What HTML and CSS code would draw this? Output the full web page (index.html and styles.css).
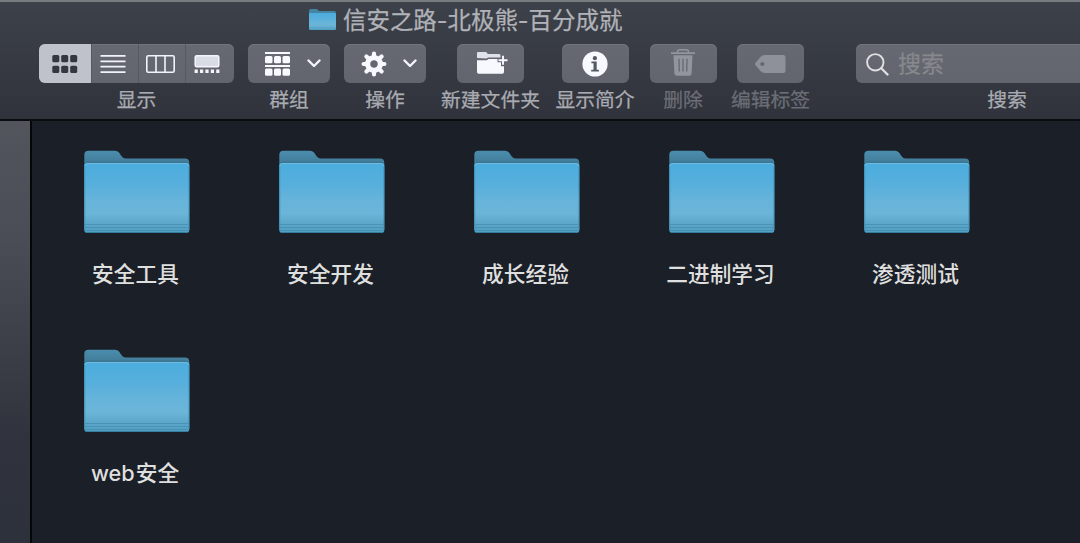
FILE: index.html
```html
<!DOCTYPE html>
<html lang="zh-CN">
<head>
<meta charset="utf-8">
<title>信安之路-北极熊-百分成就</title>
<link rel="stylesheet" href="styles.css">
</head>
<body>
<svg class="defs" width="0" height="0" aria-hidden="true">
  <defs>
    <linearGradient id="front" x1="0" y1="0" x2="0" y2="1">
      <stop offset="0" stop-color="#4badde"/>
      <stop offset=".3" stop-color="#57afdc"/>
      <stop offset=".55" stop-color="#67b4da"/>
      <stop offset=".72" stop-color="#6bb5d8"/>
      <stop offset=".86" stop-color="#5da7ca"/>
      <stop offset="1" stop-color="#4f9fc4"/>
    </linearGradient>
    <linearGradient id="back" x1="0" y1="0" x2="0" y2="1">
      <stop offset="0" stop-color="#4b8dae"/>
      <stop offset=".12" stop-color="#44809d"/>
      <stop offset="1" stop-color="#3c7894"/>
    </linearGradient>
    <symbol id="folder" viewBox="0 0 106 84">
      <path fill="url(#back)" d="M.3 80V5Q.3.8 4.5.8H31Q33.500.8 35 2.600L37.600 6.200Q39.300 8.600 41.500 8.600H101Q105.300 8.600 105.300 13V80Z"/>
      <path fill="#35708c" d="M.3 17Q.3 11.500 4 11.500H101.500Q105.300 11.500 105.300 17Z" opacity=".65"/>
      <rect x=".3" y="13" width="105" height="70" rx="3" fill="url(#front)"/>
      <path d="M1 16Q1.200 13.500 4 13.500H101.500Q104.500 13.500 104.700 16" fill="none" stroke="#6fbce0"/>
      <path d="M.8 16V80M104.800 16V80" stroke="#3f8fb8" opacity=".65"/>
      <path d="M1 74.500H104.500M1 77.500H104.500M1 80.500H104.500" stroke="#4084a4" stroke-width=".9" opacity=".6"/>
      <path d="M2 82.500H103.500" stroke="#347f9f"/>
    </symbol>
  </defs>
</svg>
<div class="window">
  <header class="header">
    <div class="title">
      <svg class="title-icon" viewBox="0 0 27 21"><path fill="#4585a3" d="M0 19V2Q0 0 2 0H8L10 2H25Q27 2 27 4V19Z"/><rect y="4" width="27" height="17" rx="1" fill="url(#front)"/></svg>
      <h1 class="title-text">信安之路-北极熊-百分成就</h1>
    </div>
    <div class="toolbar">
      <div class="tool views">
        <div class="button segments">
          <span class="segment active"><svg width="26" height="18" viewBox="0 0 26 18" fill="#333740"><rect x=".3" width="7" height="7.200" rx="1.500"/><rect x="9.200" width="7" height="7.200" rx="1.500"/><rect x="18.200" width="7" height="7.200" rx="1.500"/><rect x=".3" y="10.800" width="7" height="7.200" rx="1.500"/><rect x="9.200" y="10.800" width="7" height="7.200" rx="1.500"/><rect x="18.200" y="10.800" width="7" height="7.200" rx="1.500"/></svg></span>
          <span class="segment list"><svg width="26" height="18" viewBox="0 0 26 18" stroke="#f2f4fa" stroke-width="1.700"><path d="M.5.900H25.500M.5 6.300H25.500M.5 11.700H25.500M.5 17.100H25.500"/></svg></span>
          <span class="segment columns"><svg width="29" height="18" viewBox="0 0 29 18" fill="none" stroke="#f2f4fa" stroke-width="1.600"><rect x=".8" y=".8" width="27.400" height="16.400" rx="1.500"/><path d="M10 1V17M19 1V17"/></svg></span>
          <span class="segment gallery"><svg width="26" height="18" viewBox="0 0 26 18"><rect x="1.200" y=".8" width="23.600" height="11" rx="1.500" fill="#d9dce6" stroke="#f5f6fc" stroke-width="1.500"/><path stroke="#f2f4fa" stroke-width="3.400" d="M.6 16.200h3.200m2.200 0h3.200m2.200 0h3.200m2.200 0h3.200m2.200 0h3.200"/></svg></span>
        </div>
        <span class="label">显示</span>
      </div>
      <div class="tool menu group">
        <div class="button"><svg width="25" height="24" viewBox="0 0 25 24" fill="#f8f9ff"><path d="M0 0h25v2H0zM0 13h25v2H0z"/><rect y="4" width="7.500" height="7.200" rx="1.500"/><rect x="9" y="4" width="7" height="7.200" rx="1.500"/><rect x="17.500" y="4" width="7.500" height="7.200" rx="1.500"/><rect y="16.600" width="7.500" height="7.200" rx="1.500"/><rect x="9" y="16.600" width="7" height="7.200" rx="1.500"/><rect x="17.500" y="16.600" width="7.500" height="7.200" rx="1.500"/></svg><svg class="chevron" width="14" height="9" viewBox="0 0 14 9"><path d="M1.500 1.500 7 7 12.500 1.500"/></svg></div>
        <span class="label">群组</span>
      </div>
      <div class="tool menu">
        <div class="button"><svg width="26" height="26" viewBox="-13 -13 26 26"><circle r="6.400" fill="none" stroke="#f8f9ff" stroke-width="5.200"/><path stroke="#f8f9ff" stroke-width="4.200" stroke-linecap="round" d="M0-8V-10.400M0 8V10.400M-8 0H-10.400M8 0H10.400M-5.700-5.700-7.600-7.600M5.700 5.700 7.600 7.600M5.700-5.700 7.600-7.600M-5.700 5.700-7.600 7.600"/></svg><svg class="chevron" width="14" height="9" viewBox="0 0 14 9"><path d="M1.500 1.500 7 7 12.500 1.500"/></svg></div>
        <span class="label">操作</span>
      </div>
      <div class="tool create">
        <div class="button"><svg width="31" height="22" viewBox="0 0 31 22"><path fill="#dfe2ea" d="M0 6V1Q0 0 1 0H8.500Q9.500 0 10 .8L10.600 2H22Q23.500 2 23.500 3.500V5.600H11L9.500 6.500Z"/><path fill="#f8f9ff" d="M0 20V8.200H9.800L11.500 7H20.500V10.200H24V14.200H27V20Q27 21.700 25.300 21.700H1.700Q0 21.700 0 20Z"/><path d="M26 3.700v9M21.500 8.200h9" stroke="#f8f9ff" stroke-width="1.900"/></svg></div>
        <span class="label">新建文件夹</span>
      </div>
      <div class="tool info">
        <div class="button"><svg width="26" height="26" viewBox="0 0 26 26"><circle cx="13" cy="13" r="12.600" fill="#f8f9ff"/><circle cx="12.900" cy="7.200" r="2.100" fill="#555962"/><path fill="#555962" d="M9.400 10.500h5.300v8.200h2.200v1.800H9.200v-1.800h2.300v-6.400H9.400z"/></svg></div>
        <span class="label">显示简介</span>
      </div>
      <div class="tool delete dim">
        <div class="button"><svg width="24" height="27" viewBox="0 0 24 27"><path fill="none" stroke="#92959d" stroke-width="1.600" d="M0 4.100H24M6.600 4V2.800Q6.600.8 8.600.8H15.400Q17.400.8 17.400 2.800V4"/><path fill="#92959d" d="M2.500 6.200H21.500L20.600 24.500Q20.400 26.800 18 26.800H6Q3.600 26.800 3.400 24.500Z"/><path stroke="#686b74" stroke-width="1.400" d="M8 9.800 8.300 22.500M12 9.800V22.500M16 9.800 15.700 22.500"/></svg></div>
        <span class="label">删除</span>
      </div>
      <div class="tool tag dim">
        <div class="button"><svg width="31" height="18" viewBox="0 0 31 18"><path fill="#8e9199" fill-rule="evenodd" d="M.5 7.800 5.500 2Q7.300 0 10 0H28Q30.500 0 30.500 2.500V15.500Q30.500 18 28 18H10Q7.300 18 5.500 16L.5 10.200Q-.5 9 .5 7.800ZM7.300 7a2 2 0 1 0 .01 0Z"/></svg></div>
        <span class="label">编辑标签</span>
      </div>
      <div class="tool search">
        <div class="button"><svg width="23" height="23" viewBox="0 0 23 23" fill="none" stroke="#dfe0e3" stroke-width="1.900"><circle cx="9.300" cy="9.300" r="8.200"/><path stroke-width="2.300" stroke-linecap="round" d="M15.300 15.300 21.500 21.500"/></svg><span class="placeholder">搜索</span></div>
        <span class="label">搜索</span>
      </div>
    </div>
  </header>
  <div class="body">
    <aside class="sidebar"></aside>
    <main class="files">
      <div class="file"><svg class="folder"><use href="#folder"/></svg><span class="name">安全工具</span></div>
      <div class="file"><svg class="folder"><use href="#folder"/></svg><span class="name">安全开发</span></div>
      <div class="file"><svg class="folder"><use href="#folder"/></svg><span class="name">成长经验</span></div>
      <div class="file"><svg class="folder"><use href="#folder"/></svg><span class="name">二进制学习</span></div>
      <div class="file"><svg class="folder"><use href="#folder"/></svg><span class="name">渗透测试</span></div>
      <div class="file"><svg class="folder"><use href="#folder"/></svg><span class="name latin">web<span>安全</span></span></div>
    </main>
  </div>
</div>
</body>
</html>
```
FILE: styles.css
```css
* { box-sizing: border-box; }
body {
  margin: 0;
  background: #1b1f27;
  font-family: Inter, "Noto Sans CJK SC", sans-serif;
  overflow: hidden;
}
svg { display: block; flex: none; }
.defs { position: absolute; }
.window { width: 1080px; height: 543px; display: flex; flex-direction: column; overflow: hidden; }
.header {
  height: 121px;
  flex: none;
  border-top: 2px solid #777a7f;
  border-bottom: 2px solid #0b0c0f;
  background: linear-gradient(#3d4149, #30333b);
  overflow: hidden;
}
.title { display: flex; align-items: center; height: 36px; margin-left: 309px; gap: 7px; }
.title-icon { width: 27px; height: 21px; margin-bottom: 2px; }
.title-text { margin: 2px 0 0; font-size: 23.45px; line-height: 36px; font-weight: 400; color: #b0b2b8; white-space: nowrap; -webkit-text-stroke: .25px; }
.toolbar { display: flex; align-items: flex-start; padding: 6px 0 0 39px; }
.tool { display: flex; flex-direction: column; align-items: center; flex: none; }
.button {
  width: 67px;
  height: 39px;
  display: flex;
  align-items: center;
  justify-content: center;
  border-radius: 6px;
  background: linear-gradient(#666971, #62656d);
  box-shadow: inset 0 1px #71747b;
}
.label { height: 34px; line-height: 35px; font-size: 19.8px; color: #a9abb2; white-space: nowrap; -webkit-text-stroke: .25px; }
.dim .label { color: #6b6e76; }
.views { width: 195px; }
.views .button { width: 195px; overflow: hidden; }
.segment { flex: 1; height: 39px; display: flex; align-items: center; justify-content: center; border-left: 1px solid #565962; }
.segment.active { flex: 0 0 52px; background: #bfc2cb; border-left: 0; }
.segment.list, .segment.columns { padding-right: 4px; }
.segment.gallery { padding-right: 6px; }
.menu { width: 82px; margin-left: 14px; }
.menu .button { width: 82px; gap: 16px; padding-left: 7px; }
.menu .button svg:first-child { margin-top: 1px; }
.group .button { gap: 17px; padding-left: 8px; }
.chevron { fill: none; stroke: #f4f5fb; stroke-width: 2.4px; stroke-linecap: round; stroke-linejoin: round; }
.create { width: 99px; margin-left: 15px; }
.create .button { padding: 0 0 2px 3px; }
.info { width: 78px; margin-left: 16px; }
.delete { width: 68px; margin-left: 15px; }
.delete .button { padding-bottom: 2px; }
.tag { width: 79px; margin-left: 14px; }
.search { width: 302px; margin-left: 46px; }
.search .button { width: 302px; justify-content: flex-start; padding-left: 10px; gap: 9px; }
.search svg { margin-top: 2px; }
.placeholder { font-size: 23px; line-height: 39px; padding-top: 1px; color: #86898d; -webkit-text-stroke: .25px; }
.body { flex: 1; display: flex; min-height: 0; }
.sidebar {
  width: 32px;
  flex: none;
  border-right: 2px solid #050608;
  background: linear-gradient(#53555d, #4a4d55 28%, #3d4048 52%, #30333d 75%, #2d313b);
}
.files {
  flex: 1;
  display: grid;
  grid-template-columns: repeat(5, 195px);
  grid-auto-rows: 198.500px;
  align-content: start;
  padding: 29px 0 0 6px;
  background: #1b1f27;
}
.file { display: flex; flex-direction: column; align-items: center; }
.folder { width: 106px; height: 84px; margin-left: 3px; }
.name { margin-top: 23px; line-height: 34px; font-size: 21.7px; font-weight: 500; color: #dfdfdf; white-space: nowrap; }
.latin { display: flex; gap: 1px; margin-right: 1px; }
```
